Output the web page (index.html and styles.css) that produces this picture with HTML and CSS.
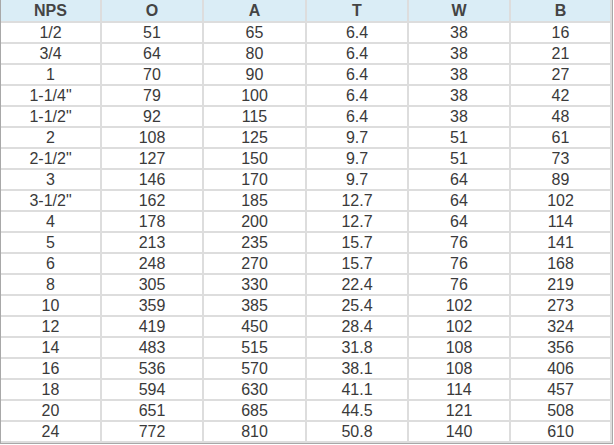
FILE: index.html
```html
<!DOCTYPE html>
<html>
<head>
<meta charset="utf-8">
<link rel="stylesheet" href="styles.css">
</head>
<body>
<table class="spec">
<colgroup>
<col class="c1"><col class="c2"><col class="c3"><col class="c4"><col class="c5"><col class="c6">
</colgroup>
<thead>
<tr><th>NPS</th><th>O</th><th>A</th><th>T</th><th>W</th><th>B</th></tr>
</thead>
<tbody>
<tr><td>1/2</td><td>51</td><td>65</td><td>6.4</td><td>38</td><td>16</td></tr>
<tr><td>3/4</td><td>64</td><td>80</td><td>6.4</td><td>38</td><td>21</td></tr>
<tr><td>1</td><td>70</td><td>90</td><td>6.4</td><td>38</td><td>27</td></tr>
<tr><td>1-1/4"</td><td>79</td><td>100</td><td>6.4</td><td>38</td><td>42</td></tr>
<tr><td>1-1/2"</td><td>92</td><td>115</td><td>6.4</td><td>38</td><td>48</td></tr>
<tr><td>2</td><td>108</td><td>125</td><td>9.7</td><td>51</td><td>61</td></tr>
<tr><td>2-1/2"</td><td>127</td><td>150</td><td>9.7</td><td>51</td><td>73</td></tr>
<tr><td>3</td><td>146</td><td>170</td><td>9.7</td><td>64</td><td>89</td></tr>
<tr><td>3-1/2"</td><td>162</td><td>185</td><td>12.7</td><td>64</td><td>102</td></tr>
<tr><td>4</td><td>178</td><td>200</td><td>12.7</td><td>64</td><td>114</td></tr>
<tr><td>5</td><td>213</td><td>235</td><td>15.7</td><td>76</td><td>141</td></tr>
<tr><td>6</td><td>248</td><td>270</td><td>15.7</td><td>76</td><td>168</td></tr>
<tr><td>8</td><td>305</td><td>330</td><td>22.4</td><td>76</td><td>219</td></tr>
<tr><td>10</td><td>359</td><td>385</td><td>25.4</td><td>102</td><td>273</td></tr>
<tr><td>12</td><td>419</td><td>450</td><td>28.4</td><td>102</td><td>324</td></tr>
<tr><td>14</td><td>483</td><td>515</td><td>31.8</td><td>108</td><td>356</td></tr>
<tr><td>16</td><td>536</td><td>570</td><td>38.1</td><td>108</td><td>406</td></tr>
<tr><td>18</td><td>594</td><td>630</td><td>41.1</td><td>114</td><td>457</td></tr>
<tr><td>20</td><td>651</td><td>685</td><td>44.5</td><td>121</td><td>508</td></tr>
<tr><td>24</td><td>772</td><td>810</td><td>50.8</td><td>140</td><td>610</td></tr>
</tbody>
</table>
</body>
</html>
```
FILE: styles.css
```css
html, body {
  margin: 0;
  padding: 0;
  background: #ffffff;
}
.spec {
  border-collapse: separate;
  border-spacing: 0;
  table-layout: fixed;
  width: 613px;
  border-left: 1px solid #a8a8a8;
  border-right: 1px solid #a8a8a8;
  border-bottom: 1px solid #a8a8a8;
  font-family: "Liberation Sans", Arial, sans-serif;
  font-size: 16px;
  color: #3a3a3a;
}
.c1 { width: 101px; }
.c2 { width: 102px; }
.c3 { width: 103px; }
.c4 { width: 102px; }
.c5 { width: 102px; }
.c6 { width: 101px; }
.spec th,
.spec td {
  box-sizing: border-box;
  padding: 0;
  text-align: center;
  border-right: 2px solid #dddddd;
  border-bottom: 2px solid #dddddd;
}
.spec th {
  background: #daedf6;
  font-weight: bold;
  height: 23px;
  line-height: 21px;
  color: #444444;
}
.spec td {
  height: 21px;
  line-height: 19px;
}
```
